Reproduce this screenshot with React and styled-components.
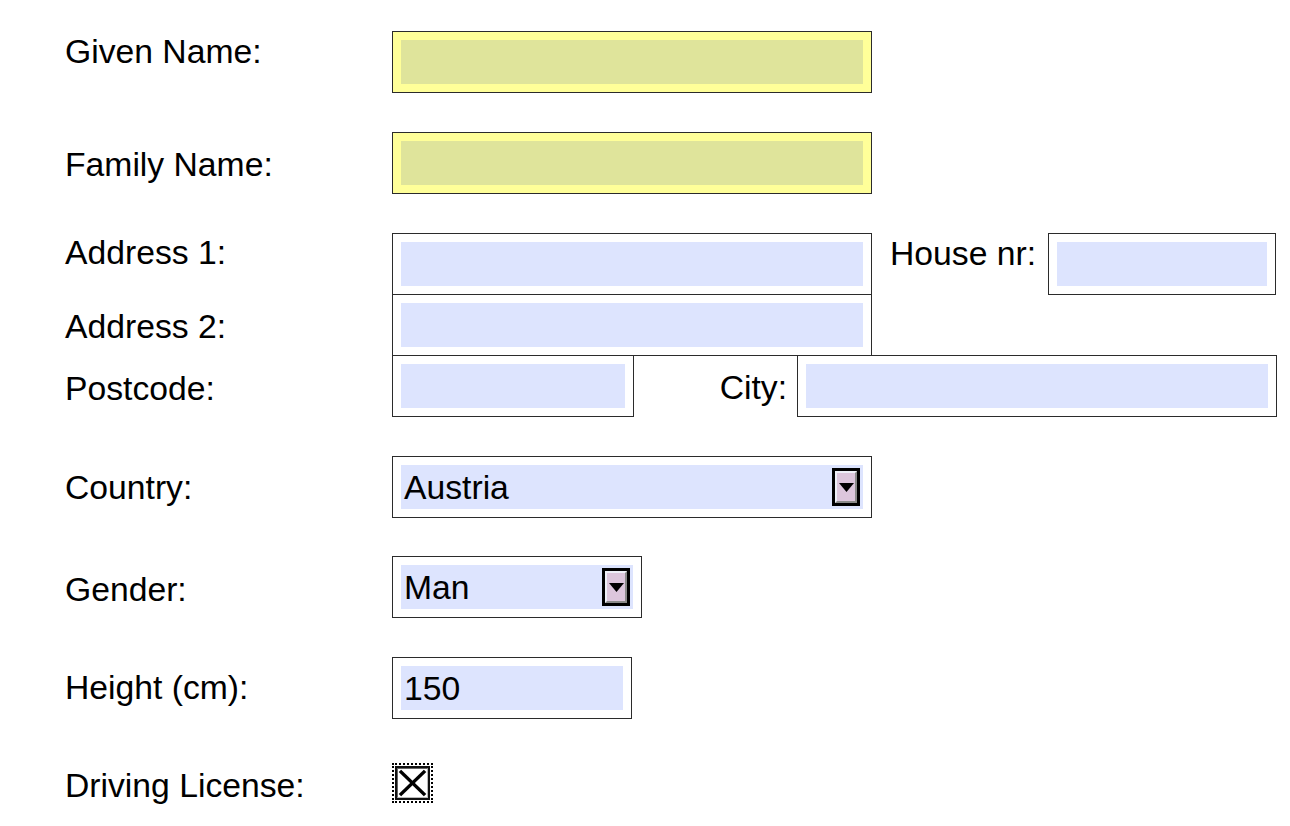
import React from "react";
import styled, { createGlobalStyle } from "styled-components";

const Global = createGlobalStyle`
  html, body { margin: 0; padding: 0; background: #fff; }
  body { font-family: "Liberation Sans", Arial, sans-serif; color: #000; }
`;

const Page = styled.div`
  display: flex;
  flex-direction: column;
  padding: 31px 0 0 65px;
  width: 1290px;
  height: 826px;
  box-sizing: border-box;
  overflow: hidden;
`;

const Row = styled.div`
  display: flex;
  align-items: flex-start;
  margin-top: ${(p) => p.$mt || 0}px;
`;

const Label = styled.div`
  width: 327px;
  flex: none;
  font-size: 33.7px;
  line-height: 36px;
  padding-top: ${(p) => p.$off || 0}px;
  white-space: nowrap;
`;

const SideLabel = styled.div`
  flex: none;
  box-sizing: border-box;
  width: ${(p) => p.$w}px;
  font-size: 33.7px;
  line-height: 36px;
  padding-top: ${(p) => p.$off || 0}px;
  padding-left: ${(p) => p.$pl || 0}px;
  padding-right: ${(p) => p.$pr || 0}px;
  text-align: ${(p) => p.$align || "left"};
  white-space: nowrap;
`;

const Field = styled.div`
  flex: none;
  box-sizing: border-box;
  width: ${(p) => p.$w}px;
  height: 62px;
  border: 1px solid #2b2b2b;
  padding: 8px;
  background: ${(p) => (p.$required ? "#ffff99" : "#ffffff")};
`;

const Fill = styled.div`
  height: 44px;
  display: flex;
  align-items: center;
  justify-content: space-between;
  padding: 0 3px;
  background: ${(p) => (p.$required ? "#dfe49b" : "#dde4fe")};
`;

const Value = styled.span`
  font-size: 33.7px;
  line-height: 44px;
  white-space: nowrap;
`;

const DropButton = styled.div`
  box-sizing: border-box;
  width: 28px;
  height: 38px;
  border: 3px solid #000;
  display: flex;
`;

const DropFace = styled.div`
  flex: 1;
  border-top: 2px solid #eef0f8;
  border-left: 2px solid #eef0f8;
  border-right: 2px solid #8a8a8a;
  border-bottom: 2px solid #8a8a8a;
  background: #dcc6dc;
  display: flex;
  align-items: center;
  justify-content: center;
`;

const CheckOuter = styled.div`
  box-sizing: border-box;
  width: 41px;
  height: 40px;
  border: 2px dotted #000;
  padding: 1px;
  display: flex;
`;

const CheckBox = styled.div`
  flex: 1;
  box-sizing: border-box;
  border: 2px solid #111;
  background: #fff;
  display: flex;
`;

const CheckFace = styled.div`
  flex: 1;
  border-top: 1px solid #666;
  border-left: 1px solid #666;
  border-right: 1px solid #bbb;
  border-bottom: 1px solid #bbb;
  display: flex;
`;

const Arrow = () => (
  <svg width="15" height="9" viewBox="0 0 15 9">
    <polygon points="0,0 15,0 7.5,9" fill="#000" />
  </svg>
);

const Select = ({ w, value }) => (
  <Field $w={w}>
    <Fill>
      <Value>{value}</Value>
      <DropButton>
        <DropFace>
          <Arrow />
        </DropFace>
      </DropButton>
    </Fill>
  </Field>
);

const Text = ({ w, value, required }) => (
  <Field $w={w} $required={required}>
    <Fill $required={required}>{value ? <Value>{value}</Value> : null}</Fill>
  </Field>
);

export default function App() {
  return (
    <>
      <Global />
      <Page>
        <Row>
          <Label $off={2}>Given Name:</Label>
          <Text w={480} required />
        </Row>
        <Row $mt={39}>
          <Label $off={14}>Family Name:</Label>
          <Text w={480} required />
        </Row>
        <Row $mt={39}>
          <Label $off={1}>Address 1:</Label>
          <Text w={480} />
          <SideLabel $w={176} $pl={18} $off={2}>House nr:</SideLabel>
          <Text w={228} />
        </Row>
        <Row $mt={-1}>
          <Label $off={14}>Address 2:</Label>
          <Text w={480} />
        </Row>
        <Row $mt={-1}>
          <Label $off={15}>Postcode:</Label>
          <Text w={242} />
          <SideLabel $w={163} $pr={10} $align="right" $off={14}>City:</SideLabel>
          <Text w={480} />
        </Row>
        <Row $mt={39}>
          <Label $off={13}>Country:</Label>
          <Select w={480} value="Austria" />
        </Row>
        <Row $mt={38}>
          <Label $off={15}>Gender:</Label>
          <Select w={250} value="Man" />
        </Row>
        <Row $mt={39}>
          <Label $off={12}>Height (cm):</Label>
          <Text w={240} value="150" />
        </Row>
        <Row $mt={44}>
          <Label $off={4}>Driving License:</Label>
          <CheckOuter>
            <CheckBox>
              <CheckFace>
                <svg width="100%" height="100%" viewBox="0 0 30 30" preserveAspectRatio="none">
                  <line x1="2" y1="2" x2="28" y2="28" stroke="#000" strokeWidth="3.6" />
                  <line x1="28" y1="2" x2="2" y2="28" stroke="#000" strokeWidth="3.6" />
                </svg>
              </CheckFace>
            </CheckBox>
          </CheckOuter>
        </Row>
      </Page>
    </>
  );
}
